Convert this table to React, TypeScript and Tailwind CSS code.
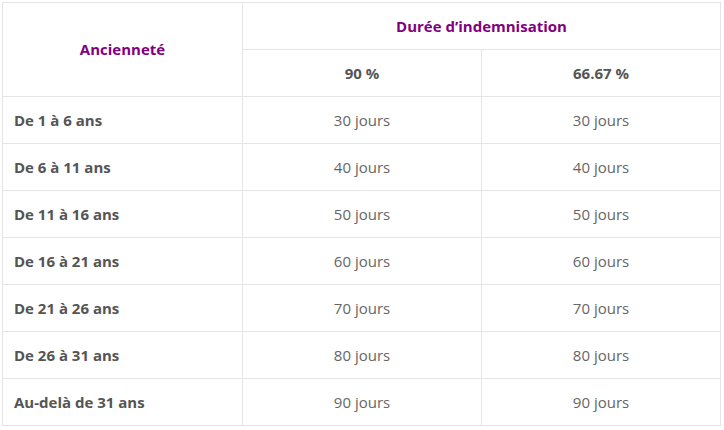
const rows = [
  ["De 1 à 6 ans", "30 jours", "30 jours"],
  ["De 6 à 11 ans", "40 jours", "40 jours"],
  ["De 11 à 16 ans", "50 jours", "50 jours"],
  ["De 16 à 21 ans", "60 jours", "60 jours"],
  ["De 21 à 26 ans", "70 jours", "70 jours"],
  ["De 26 à 31 ans", "80 jours", "80 jours"],
  ["Au-delà de 31 ans", "90 jours", "90 jours"],
];

export default function App() {
  return (
    <div
      className="w-[724px] h-[430px] bg-white pl-[2px] pt-[2px]"
      style={{ fontFamily: '"Open Sans", "Liberation Sans", sans-serif' }}
    >
      <table className="w-[718px] table-fixed border-collapse text-[15px]">
        <colgroup>
          <col className="w-[240px]" />
          <col className="w-[239px]" />
          <col className="w-[239px]" />
        </colgroup>
        <thead>
          <tr className="h-[47px]">
            <th
              rowSpan={2}
              className="border border-[#e5e5e5] text-center align-middle font-bold text-[#800080]"
            >
              Ancienneté
            </th>
            <th
              colSpan={2}
              className="border border-[#e5e5e5] text-center align-middle font-bold text-[#800080]"
            >
              Durée d’indemnisation
            </th>
          </tr>
          <tr className="h-[47px]">
            <th className="border border-[#e5e5e5] border-l-[#cfcfcf] text-center align-middle font-bold text-[#555]">
              90 %
            </th>
            <th className="border border-[#e5e5e5] text-center align-middle font-bold text-[#555]">
              66.67 %
            </th>
          </tr>
        </thead>
        <tbody>
          {rows.map(([label, a, b]) => (
            <tr key={label} className="h-[47px]">
              <td className="border border-[#e5e5e5] pl-[11px] text-left align-middle font-bold text-[#555]">
                {label}
              </td>
              <td className="border border-[#e5e5e5] text-center align-middle text-[#666]">
                {a}
              </td>
              <td className="border border-[#e5e5e5] text-center align-middle text-[#666]">
                {b}
              </td>
            </tr>
          ))}
        </tbody>
      </table>
    </div>
  );
}
